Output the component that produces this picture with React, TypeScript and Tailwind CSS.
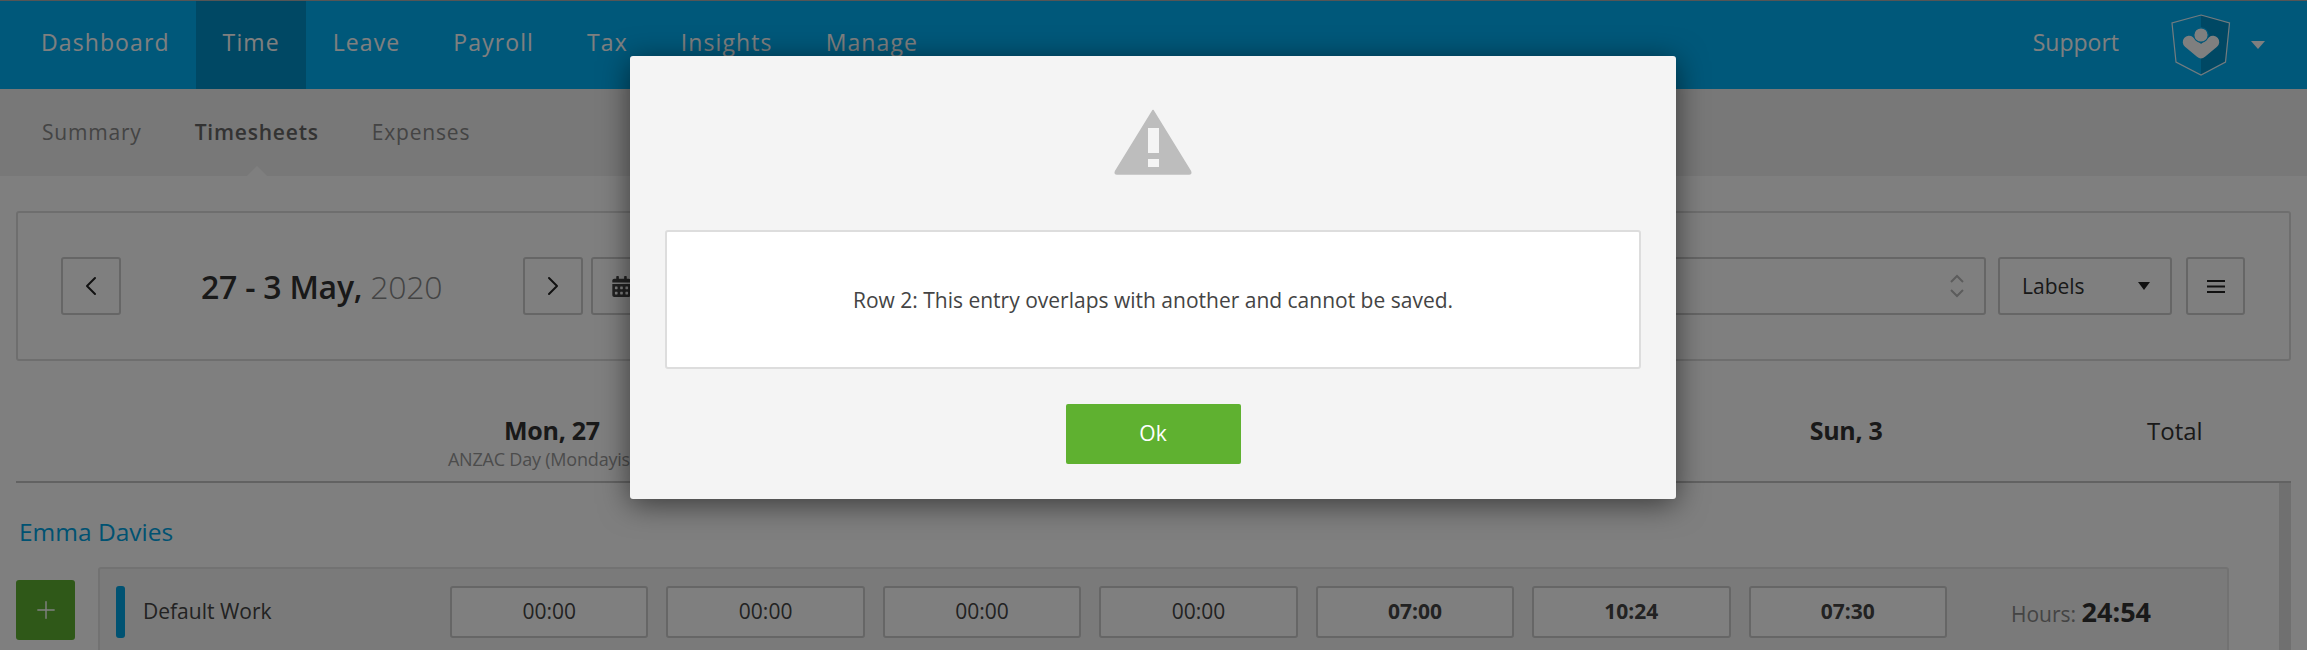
import React from "react";
import { ChevronLeft, ChevronRight, Plus } from "lucide-react";
import { FaCalendarAlt } from "react-icons/fa";

const navItems = ["Dashboard", "Time", "Leave", "Payroll", "Tax", "Insights", "Manage"];
// the middle days sit behind the dialog in the screenshot
const days = [
  { id: "mon", label: "Mon, 27", note: "ANZAC Day (Mondayised)" },
  { id: "tue" },
  { id: "wed" },
  { id: "thu" },
  { id: "fri" },
  { id: "sat" },
  { id: "sun", label: "Sun, 3" },
];
const times = [
  { value: "00:00", bold: false },
  { value: "00:00", bold: false },
  { value: "00:00", bold: false },
  { value: "00:00", bold: false },
  { value: "07:00", bold: true },
  { value: "10:24", bold: true },
  { value: "07:30", bold: true },
];

const ShieldLogo = () => (
  <svg width="60" height="62" viewBox="-1 -1 60 62" fill="none">
    <path d="M29 0L57.5 8L53.5 47L29 60Z" fill="#0090c8" />
    <path d="M29 0L57.5 8L53.5 47L29 60L4 47L0 8Z" stroke="#ffffff" strokeOpacity="0.9" strokeWidth="1.2" />
    <path d="M17 27L29 37L41 27" stroke="#ffffff" strokeWidth="12.5" strokeLinecap="round" strokeLinejoin="round" />
    <circle cx="29" cy="20" r="7.2" fill="#ffffff" stroke="#00b0f5" strokeWidth="1.2" />
  </svg>
);

const WarningIcon = () => (
  <svg width="78" height="66" viewBox="0 0 78 66">
    <path
      d="M39 1.5L76.5 62.5Q77.5 65 75 65H3Q0.5 65 1.5 62.5Z"
      fill="#bdbdbd"
      stroke="#bdbdbd"
      strokeWidth="1.5"
      strokeLinejoin="round"
    />
    <rect x="34" y="19" width="11" height="25" fill="#f4f4f4" />
    <rect x="34" y="50" width="11" height="8" fill="#f4f4f4" />
  </svg>
);

export default function App() {
  return (
    <div className="relative h-[650px] w-[2307px] overflow-hidden bg-white font-['Open_Sans',sans-serif] text-[#333]">
      <div className="h-px bg-[#aaaaaa]" />
      <header className="flex h-[88px] items-stretch justify-between bg-[#00b0f5] pl-[14.5px] text-white">
        <nav className="flex">
          {navItems.map((item) => (
            <span
              key={item}
              className={`flex items-center px-[26.5px] pb-[5px] text-[23px] tracking-[1.1px] ${item === "Time" ? "bg-[#0090c8]" : ""}`}
            >
              {item}
            </span>
          ))}
        </nav>
        <div className="flex items-center pr-[42px]">
          <span className="mr-[52px] pb-[5px] text-[23px]">Support</span>
          <ShieldLogo />
          <span className="ml-[20px] h-0 w-0 border-x-[7px] border-t-[8px] border-x-transparent border-t-white" />
        </div>
      </header>
      <div className="flex h-[87px] items-center gap-[53px] bg-[#f0f0f0] pt-[1px] pl-[42px] text-[21px] tracking-[0.8px] text-[#888]">
        <span>Summary</span>
        <span className="relative font-semibold text-[#666]">
          Timesheets
          <span className="absolute top-[49px] left-1/2 h-0 w-0 -translate-x-1/2 border-x-[17px] border-b-[17px] border-x-transparent border-b-white" />
        </span>
        <span>Expenses</span>
      </div>

      <main className="px-[16px] pt-[35px]">
        <section className="flex h-[150px] items-center rounded-[3px] border-2 border-[#dddddd] pr-[44px] pl-[43px]">
          <button className="flex h-[58px] w-[60px] items-center justify-center rounded-[3px] border-2 border-[#cccccc]">
            <ChevronLeft size={32} strokeWidth={1.5} className="text-[#222]" />
          </button>
          <h2 className="ml-[80px] w-[322px] pt-[2px] text-[32px] font-semibold tracking-[-0.25px] whitespace-nowrap text-[#333]">
            27 - 3 May, <span className="font-light text-[#888]">2020</span>
          </h2>
          <button className="flex h-[58px] w-[60px] items-center justify-center rounded-[3px] border-2 border-[#cccccc]">
            <ChevronRight size={32} strokeWidth={1.5} className="text-[#222]" />
          </button>
          <button className="ml-[8px] flex h-[58px] w-[60px] items-center rounded-[3px] border-2 border-[#cccccc] pl-[18px]">
            <FaCalendarAlt size={21} className="text-[#444]" />
          </button>
          <div className="ml-auto flex h-[58px] w-[800px] items-center justify-end rounded-[3px] border-2 border-[#cccccc] pr-[20px]">
            <svg width="14" height="24" viewBox="0 0 14 24" fill="none" stroke="#b8b8b8" strokeWidth="2">
              <path d="M1 8L7 2L13 8" />
              <path d="M1 16L7 22L13 16" />
            </svg>
          </div>
          <button className="ml-[12px] flex h-[58px] w-[174px] items-center justify-between rounded-[3px] border-2 border-[#cccccc] pr-[20px] pl-[22px] text-[21px]">
            <span className="pt-[2px]">Labels</span>
            <span className="h-0 w-0 border-x-[6px] border-t-[8px] border-x-transparent border-t-[#222]" />
          </button>
          <button className="ml-[14px] flex h-[58px] w-[59px] items-center justify-center rounded-[3px] border-2 border-[#cccccc]">
            <svg width="18" height="13" viewBox="0 0 18 13" fill="#222">
              <rect width="18" height="2" />
              <rect y="5.5" width="18" height="2" />
              <rect y="11" width="18" height="2" />
            </svg>
          </button>
        </section>

        <div className="mt-[30px] flex h-[92px] border-b-2 border-[#c4c4c4] pl-[437px]">
          <div className="grid w-[1492px] grid-cols-7 gap-x-[18px]">
            {days.map((day) => (
              <div key={day.id} className="pt-[23px] text-center">
                {day.label && <div className="text-[25px] leading-[32px] font-bold tracking-[-0.3px] whitespace-nowrap text-[#333]">{day.label}</div>}
                {day.note && <div className="-mx-4 text-[18px] leading-[26px] tracking-[-0.2px] whitespace-nowrap text-[#999]">{day.note}</div>}
              </div>
            ))}
          </div>
          <span className="ml-[202px] pt-[24px] text-[24px] leading-[32px] text-[#333]">Total</span>
        </div>

        <div className="flex">
          <div className="min-w-0 flex-1">
            <h3 className="mt-[33px] ml-[3px] text-[24.5px] leading-[32px] text-[#00a4e4]">Emma Davies</h3>
            <div className="mt-[19px] flex items-start gap-[24px]">
              <button className="mt-[13px] flex h-[60px] w-[59px] items-center justify-center rounded-[3px] bg-[#5fb130] text-white">
                <Plus size={28} strokeWidth={1.25} />
              </button>
              <div className="-ml-[1px] flex h-[100px] w-[2131px] rounded-[3px] border-2 border-[#e4e4e4] bg-[#f4f4f4] pt-[17px] pl-[16px]">
                <span className="h-[52px] w-[9px] rounded-[3px] bg-[#00a4e4]" />
                <span className="ml-[18px] w-[307px] pt-[11px] text-[21px] leading-[28px] text-[#444]">Default Work</span>
                <div className="grid h-[52px] w-[1497px] grid-cols-7 gap-x-[18px]">
                  {times.map((t, i) => (
                    <div
                      key={i}
                      className={`flex items-center justify-center rounded-[3px] border-2 border-[#cccccc] bg-white text-[21px] text-[#444] ${t.bold ? "font-bold" : ""}`}
                    >
                      {t.value}
                    </div>
                  ))}
                </div>
                <span className="ml-[64px] pt-[10px] text-[21px] leading-[32px] whitespace-nowrap text-[#888]">
                  Hours: <strong className="text-[27px] text-[#333]">24:54</strong>
                </span>
              </div>
            </div>
          </div>
          <div className="w-[12px] bg-[#e0e0e0]" />
        </div>
      </main>

      <div className="absolute inset-0 bg-black/50" />

      <div className="absolute top-[56px] left-[630px] flex h-[443px] w-[1046px] flex-col items-center rounded-[3px] bg-[#f4f4f4] px-[35px] pt-[53px] shadow-[0_5px_30px_rgba(0,0,0,0.55)]">
        <WarningIcon />
        <div className="mt-[55px] flex h-[139px] w-full items-center justify-center rounded-[3px] border-2 border-[#dddddd] bg-white pt-[2px] text-[21px] text-[#444]">
          Row 2: This entry overlaps with another and cannot be saved.
        </div>
        <button className="mt-[35px] h-[60px] w-[175px] rounded-[2px] bg-[#5fb130] text-[21px] text-white">Ok</button>
      </div>
    </div>
  );
}
